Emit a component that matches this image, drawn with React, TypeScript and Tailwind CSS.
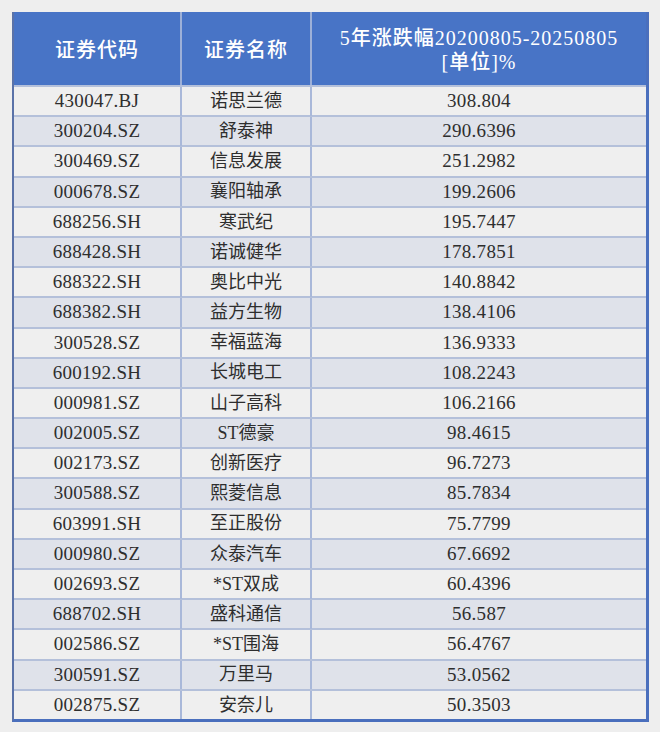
import React from "react";

const rows: [string, string, string][] = [
  ["430047.BJ", "诺思兰德", "308.804"],
  ["300204.SZ", "舒泰神", "290.6396"],
  ["300469.SZ", "信息发展", "251.2982"],
  ["000678.SZ", "襄阳轴承", "199.2606"],
  ["688256.SH", "寒武纪", "195.7447"],
  ["688428.SH", "诺诚健华", "178.7851"],
  ["688322.SH", "奥比中光", "140.8842"],
  ["688382.SH", "益方生物", "138.4106"],
  ["300528.SZ", "幸福蓝海", "136.9333"],
  ["600192.SH", "长城电工", "108.2243"],
  ["000981.SZ", "山子高科", "106.2166"],
  ["002005.SZ", "ST德豪", "98.4615"],
  ["002173.SZ", "创新医疗", "96.7273"],
  ["300588.SZ", "熙菱信息", "85.7834"],
  ["603991.SH", "至正股份", "75.7799"],
  ["000980.SZ", "众泰汽车", "67.6692"],
  ["002693.SZ", "*ST双成", "60.4396"],
  ["688702.SH", "盛科通信", "56.587"],
  ["002586.SZ", "*ST围海", "56.4767"],
  ["300591.SZ", "万里马", "53.0562"],
  ["002875.SZ", "安奈儿", "50.3503"],
];

const font = { fontFamily: '"Liberation Serif", "Noto Sans CJK SC", serif' };

export default function App() {
  return (
    <div className="w-[660px] h-[732px] bg-[#eeeeee] pt-[12px] pl-[12px]" style={font}>
      <div className="w-[637px] border-l-2 border-l-[#5a72a8] border-r-[3px] border-r-[#4a6fbd] border-b-[3px] border-b-[#4a6fbd]">
        <div className="grid grid-cols-[166px_2px_128px_2px_334px] h-[73px] bg-[#4874c6] text-white">
          <div className="flex items-center justify-center text-[20px] font-medium tracking-[1px] pt-[3px]">证券代码</div>
          <div className="bg-[#9db0d8]" />
          <div className="flex items-center justify-center text-[20px] font-medium tracking-[1px] pt-[3px]">证券名称</div>
          <div className="bg-[#9db0d8]" />
          <div className="flex flex-col items-center justify-center text-[20px] font-medium leading-[24px] tracking-[1px] pt-[3px]">
            <div>5年涨跌幅20200805-20250805</div>
            <div>[单位]%</div>
          </div>
        </div>
        {rows.map((r, i) => (
          <div
            key={r[0]}
            className={
              "grid grid-cols-[166px_2px_128px_2px_334px] h-[30.2px] border-t-2 border-t-[#b4c0da] text-[#2e2e2e] text-[19px] " +
              (i % 2 === 0 ? "bg-[#efefef]" : "bg-[#dfe2ea]")
            }
          >
            <div className="flex items-center justify-center tracking-[0.3px]">{r[0]}</div>
            <div className="bg-[#a9b8d9]" />
            <div className="flex items-center justify-center text-[18px]">{r[1]}</div>
            <div className="bg-[#a9b8d9]" />
            <div className="flex items-center justify-center tracking-[0.3px]">{r[2]}</div>
          </div>
        ))}
      </div>
    </div>
  );
}
